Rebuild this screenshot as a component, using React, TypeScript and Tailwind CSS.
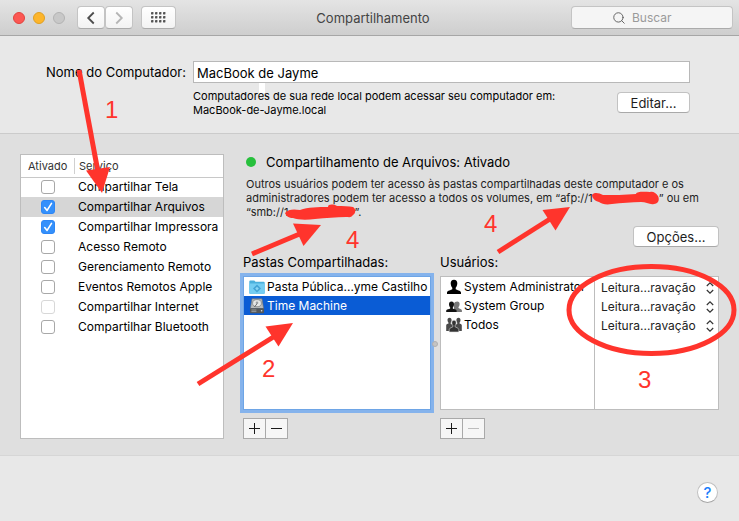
import { useState, type ReactNode } from "react";
import { ChevronLeft, ChevronRight, Search } from "lucide-react";

const services = [
  { id: "tela", name: "Compartilhar Tela", on: false },
  { id: "arquivos", name: "Compartilhar Arquivos", on: true },
  { id: "impressora", name: "Compartilhar Impressora", on: true },
  { id: "remoto", name: "Acesso Remoto", on: false },
  { id: "gerenciamento", name: "Gerenciamento Remoto", on: false },
  { id: "eventos", name: "Eventos Remotos Apple", on: false },
  { id: "internet", name: "Compartilhar Internet", on: false, disabled: true },
  { id: "bluetooth", name: "Compartilhar Bluetooth", on: false },
];

const FolderIcon = () => (
  <svg className="shrink-0" width="16" height="16" viewBox="0 0 16 16">
    <path d="M.3 2.500a1 1 0 0 1 1-1h4l1.200 1.300h8.200a1 1 0 0 1 1 1V14a.8.8 0 0 1-.8.8H1.100a.8.8 0 0 1-.8-.8z" fill="#4bb0dc" />
    <path d="M.3 4.600h15.400V14a.8.8 0 0 1-.8.8H1.100a.8.8 0 0 1-.8-.8z" fill="#74cdf2" />
    <path d="M8 5.600l4 4-4 4-4-4z" fill="#43a3d4" />
    <path d="M8 7.800l1.800 1.800L8 11.400 6.200 9.600z" fill="#8ad6f5" />
  </svg>
);

const DiskIcon = () => (
  <svg className="shrink-0" width="16" height="16" viewBox="0 0 16 16">
    <path d="M3 .8h10l1.600 9.700H1.400z" fill="#b9bbbc" stroke="#6d7174" strokeWidth=".6" />
    <ellipse cx="8" cy="5.200" rx="4.400" ry="3.600" fill="#e6e7e7" stroke="#7c8083" strokeWidth=".8" />
    <circle cx="8" cy="4.800" r="1.300" fill="#9b9ea1" />
    <path d="M8 5.800L5.400 9" stroke="#5c5f62" strokeWidth=".9" />
    <rect x="1" y="10.200" width="14" height="5" rx=".8" fill="#55585a" />
    <path d="M2.400 12h5M2.400 13.600h5" stroke="#a6a9ab" strokeWidth=".8" />
    <circle cx="12.600" cy="12.700" r=".8" fill="#dfe1e2" />
  </svg>
);

const UserIcon = () => (
  <svg className="shrink-0" width="16" height="16" viewBox="0 0 16 16">
    <path d="M8 .8c2.200 0 3.400 1.600 3.300 3.800-.1 2-.8 3.300-1.600 4.100v1.500c1.200.9 5 1.200 5.300 3.200V15H1v-1.600c.3-2 4.100-2.300 5.300-3.200V8.700C5.500 7.900 4.800 6.600 4.700 4.600 4.600 2.400 5.800.8 8 .8z" fill="#000" />
  </svg>
);

const GroupIcon = () => (
  <svg className="shrink-0" width="16" height="16" viewBox="0 0 16 16">
    <path d="M11.300 3.500c1.500 0 2.400 1.100 2.300 2.700-.1 1.300-.5 2.200-1.100 2.800v1c.8.700 3.200.9 3.400 2.300V14H8V5.500c.4-1.300 1.700-2 3.300-2z" fill="#777" />
    <path d="M5.500 3.500c1.700 0 2.600 1.200 2.500 2.900-.1 1.400-.6 2.400-1.200 3v1c.9.700 3.600.8 3.800 2.200V14H.2v-1.400c.2-1.400 3.100-1.500 4-2.200v-1c-.6-.6-1.100-1.600-1.200-3C2.900 4.700 3.800 3.500 5.500 3.500z" fill="#111" />
  </svg>
);

const EveryoneIcon = () => (
  <svg className="shrink-0" width="16" height="16" viewBox="0 0 16 16">
    <path d="M3.500.8c1.400 0 2.200 1 2.100 2.500-.1 1.200-.4 2-.9 2.500v1c.6.500 2 .8 2.300 1.800V14H.2V8.200C.3 7.200 1.800 7 2.500 6.600v-.8c-.5-.5-.9-1.300-1-2.500C1.400 1.800 2.100.8 3.500.8z" fill="#4a4a4a" />
    <path d="M12.500.8c-1.400 0-2.200 1-2.100 2.500.1 1.200.4 2 .9 2.500v1c-.6.500-2 .8-2.300 1.800V14h6.800V8.200c-.1-1-1.600-1.200-2.300-1.600v-.8c.5-.5.9-1.300 1-2.500.1-1.500-.6-2.500-2-2.500z" fill="#4a4a4a" />
    <path d="M8 3.200c1.500 0 2.300 1.100 2.200 2.700-.1 1.300-.5 2.200-1.100 2.700v1.200c.9.700 3.500 1 3.700 2.800V15H3.200v-2.400c.2-1.800 2.800-2.100 3.700-2.800V8.600c-.6-.5-1-1.400-1.100-2.700C5.700 4.300 6.500 3.200 8 3.200z" fill="#333" stroke="#ddd" strokeWidth=".6" />
  </svg>
);

const users = [
  { name: "System Administrator", icon: <UserIcon /> },
  { name: "System Group", icon: <GroupIcon /> },
  { name: "Todos", icon: <EveryoneIcon /> },
];

const toolButton =
  "flex h-[23px] items-center justify-center rounded border border-[#c4c4c4] border-b-[#ababab] bg-gradient-to-b from-white to-[#f3f3f3]";

const PushButton = ({ children }: { children: ReactNode }) => (
  <button className="h-[21px] rounded border border-[#c2c2c2] border-b-[#a9a9a9] bg-white text-[13px] leading-4 text-[#1d1d1d]">
    {children}
  </button>
);

const AddRemove = ({ label, removable = true }: { label: string; removable?: boolean }) => (
  <div className="flex">
    <button aria-label={`Adicionar ${label}`} className="flex h-[21px] w-[23px] items-center justify-center border border-[#a9a9a9] bg-[#f6f6f6]">
      <svg width="11" height="11" viewBox="0 0 11 11" stroke="#1a1a1a">
        <path d="M0 5.500h11M5.500 0v11" />
      </svg>
    </button>
    <button
      aria-label={`Remover ${label}`}
      disabled={!removable}
      className="-ml-px flex h-[21px] w-[23px] items-center justify-center border border-[#a9a9a9] bg-[#f6f6f6] text-[#1a1a1a] disabled:text-[#bcbcbc]"
    >
      <svg width="11" height="11" viewBox="0 0 11 11" stroke="currentColor">
        <path d="M0 5.500h11" />
      </svg>
    </button>
  </div>
);

const TitleBar = () => (
  <header className="grid grid-cols-[1fr_auto_1fr] items-center border-b border-[#a6a6a6] bg-gradient-to-b from-[#e4e4e4] to-[#cecece] py-1.5 pr-1.5 pl-[13px]">
    <div className="flex items-center">
      <div className="flex gap-2">
        <button aria-label="Fechar" className="size-3 rounded-full border border-[#e0443e] bg-[#fc5753]" />
        <button aria-label="Minimizar" className="size-3 rounded-full border border-[#dfa023] bg-[#fdb52b]" />
        <button aria-label="Ampliar" disabled className="size-3 rounded-full border border-[#b3b3b3] bg-[#c8c8c8]" />
      </div>
      <button aria-label="Voltar" className={`${toolButton} ml-3 w-7`}>
        <ChevronLeft className="size-[22px] text-[#4d4d4d]" strokeWidth={2} strokeLinecap="butt" strokeLinejoin="miter" />
      </button>
      <button aria-label="Avançar" className={`${toolButton} w-7`}>
        <ChevronRight className="size-[22px] text-[#b5b5b5]" strokeWidth={2} strokeLinecap="butt" strokeLinejoin="miter" />
      </button>
      <button aria-label="Mostrar tudo" className={`${toolButton} ml-2 w-[35px]`}>
        <svg width="15" height="11" viewBox="0 0 15 11" fill="#555">
          {[0, 4, 8].map((y) =>
            [0, 4, 8, 12].map((x) => <rect key={`${x}-${y}`} x={x} y={y} width="2.400" height="2.400" rx=".4" />)
          )}
        </svg>
      </button>
    </div>
    <h1 className="text-[13px] leading-4 text-[#444]">Compartilhamento</h1>
    <label className="flex h-[23px] w-[162px] items-center gap-1.5 justify-self-end rounded border border-[#c4c4c4] border-b-[#ababab] bg-[#f5f5f5] pl-10">
      <Search className="size-[14px] shrink-0 text-[#5c5c5c]" strokeWidth={1.6} />
      <input aria-label="Buscar" placeholder="Buscar" className="w-full min-w-0 bg-transparent text-xs leading-4 outline-none placeholder:text-[#9a9a9a]" />
    </label>
  </header>
);

const ComputerName = () => (
  <section className="grid grid-cols-[172px_1fr] gap-x-[7px] border-b border-[#cbcbcb] pt-[25px] pr-[49px] pb-[16px] pl-[14px]">
    <label htmlFor="computer" className="pt-[3px] text-right text-[13px] leading-4">
      Nome do Computador:
    </label>
    <input id="computer" defaultValue="MacBook de Jayme" className="h-[22px] w-full border border-[#b8b8b8] bg-white px-[3px] pt-0.5 text-[13px] leading-4 outline-none" />
    <div className="relative col-start-2 flex items-start justify-between">
      <span className="absolute top-0 left-[66px] h-2.5 w-1.5 bg-white" />
      <p className="relative pt-1.5 text-[11px] leading-[14px]">
        Computadores de sua rede local podem acessar seu computador em:
        <br />
        MacBook-de-Jayme.local
      </p>
      <div className="flex w-[73px] flex-col pt-[9px]">
        <PushButton>Editar...</PushButton>
      </div>
    </div>
  </section>
);

const Services = () => {
  const [active, setActive] = useState(services.filter((s) => s.on).map((s) => s.id));

  const toggle = (id: string) =>
    setActive(active.includes(id) ? active.filter((a) => a !== id) : [...active, id]);

  return (
    <div className="w-[204px] shrink-0 border border-[#bdbdbd] bg-white">
      <table className="w-full table-fixed border-collapse">
        <thead>
          <tr className="h-[22px] border-b border-[#c8c8c8] text-left text-[11px] text-[#333]">
            <th className="w-[53px] py-0 pr-0 pl-[7px] font-normal">Ativado</th>
            <th className="py-0 font-normal">
              <div className="border-l border-[#d0d0d0] pl-1">Serviço</div>
            </th>
          </tr>
        </thead>
        <tbody>
          {services.map((s) => (
            <tr key={s.id} className={s.id === "arquivos" ? "h-5 bg-[#d6d6d6]" : "h-5"}>
              <td className="p-0 pl-5">
                <span className="grid size-3.5">
                  <input
                    type="checkbox"
                    id={s.id}
                    checked={active.includes(s.id)}
                    disabled={s.disabled}
                    onChange={() => toggle(s.id)}
                    className="col-start-1 row-start-1 size-3.5 appearance-none rounded-[3px] border border-[#a8a8a8] bg-white checked:border-[#2d86f5] checked:bg-[#3490fb] disabled:border-[#d8d8d8]"
                  />
                  {active.includes(s.id) && (
                    <svg className="pointer-events-none col-start-1 row-start-1" viewBox="0 0 14 14" fill="none" stroke="#fff" strokeWidth="1.600" strokeLinecap="round" strokeLinejoin="round">
                      <path d="M3.700 7.500l2.400 2.900 4.400-7" />
                    </svg>
                  )}
                </span>
              </td>
              <td className="p-0 pl-1 text-xs whitespace-nowrap">
                <label htmlFor={s.id}>{s.name}</label>
              </td>
            </tr>
          ))}
        </tbody>
      </table>
    </div>
  );
};

const SharedFolders = () => (
  <div className="w-[188px] shrink-0">
    <h3 className="pb-1.5 text-[13px] leading-4">Pastas Compartilhadas:</h3>
    <ul className="h-[134px] border border-[#6ea5e6] bg-white text-xs leading-[19px] whitespace-nowrap ring-3 ring-[#85b3ec]">
      <li className="flex items-center gap-0.5 pl-[5px]">
        <FolderIcon />
        Pasta Pública...yme Castilho
      </li>
      <li className="flex items-center gap-0.5 bg-[#0a5cd5] pl-[5px] text-white">
        <DiskIcon />
        Time Machine
      </li>
    </ul>
    <div className="pt-2">
      <AddRemove label="pasta" />
    </div>
  </div>
);

const Users = () => (
  <div className="min-w-0 flex-1">
    <h3 className="pb-1.5 text-[13px] leading-4">Usuários:</h3>
    <div className="grid h-[134px] grid-cols-[1fr_124px] border border-[#bdbdbd] bg-white text-xs leading-[19px]">
      <ul className="min-w-0 pl-[5px]">
        {users.map((u) => (
          <li key={u.name} className="flex items-center gap-0.5 whitespace-nowrap">
            {u.icon}
            {u.name}
          </li>
        ))}
      </ul>
      <div className="border-l border-[#bdbdbd] pt-px pr-1 pl-1.5">
        {users.map((u) => (
          <div key={u.name} className="grid items-center">
            <select aria-label={`Permissão de ${u.name}`} className="col-start-1 row-start-1 h-[19px] w-full appearance-none bg-transparent text-xs leading-[19px] text-[#222] outline-none">
              <option>Leitura...ravação</option>
            </select>
            <svg className="pointer-events-none col-start-1 row-start-1 justify-self-end" width="8" height="12" viewBox="0 0 8 12" fill="none" stroke="#333" strokeWidth="1.200">
              <path d="M.8 4L4 .9 7.200 4M.8 8L4 11.100 7.200 8" />
            </svg>
          </div>
        ))}
      </div>
    </div>
    <div className="pt-2">
      <AddRemove label="usuário" removable={false} />
    </div>
  </div>
);

const FileSharing = () => (
  <div className="min-w-0 flex-1">
    <h2 className="flex items-center gap-2.5 pl-[3px] text-[13px] leading-4">
      <span className="size-2.5 rounded-full bg-[#27c03c]" />
      Compartilhamento de Arquivos: Ativado
    </h2>
    <p className="pt-[7px] pl-[3px] text-[11px] leading-[14px] whitespace-nowrap text-[#222]">
      Outros usuários podem ter acesso às pastas compartilhadas deste computador e os
      <br />
      administradores podem ter acesso a todos os volumes, em “afp://1
      <span className="inline-block w-[66px]" />” ou em
      <br />
      “smb://1
      <span className="inline-block w-[66px]" />”.
    </p>
    <div className="flex justify-end pt-[7px]">
      <div className="flex w-[86px] flex-col">
        <PushButton>Opções...</PushButton>
      </div>
    </div>
    <div className="flex items-center pt-[7px]">
      <SharedFolders />
      {/* Split handle */}
      <span className="relative mr-0.5 mb-1.5 ml-px size-1.5 shrink-0 rounded-full border border-[#b0b0b0] bg-[#c4c4c4]" />
      <Users />
    </div>
  </div>
);

// Red arrows, numbers and scribbles drawn over the window
const Annotations = () => (
  <svg className="pointer-events-none absolute top-0 left-0" width="739" height="521" viewBox="0 0 739 521">
    <g stroke="#ff342c" strokeWidth="5" fill="none">
      <path d="M79 70L98 172" />
      <path d="M198 384L275 336" />
      <path d="M252 254L302 233" />
      <path d="M498 252L550 219" />
      <ellipse cx="651.500" cy="310" rx="82.500" ry="43.500" />
    </g>
    <g fill="#ff342c">
      <path d="M86 170.500L110 167L102 193z" />
      <path d="M265.500 326.500L293 323L278.500 346.500z" />
      <path d="M293 223.500L321 225L303.500 246z" />
      <path d="M542.500 210L570 207L555.500 230.500z" />
      <path d="M285 213c3-4 9-4 15-3 8-3 18-3 28-3 0-3 5-3 9-1 6 0 12 0 16 1 3 2 3 6 0 8-2 3-4 2-7 2-10 0-20 1-31 2-8 1-17 1-22-1-4 0-7-2-8-5z" />
      <path d="M592 195c2-3 7-2 11 0 10 0 22 0 33-1 1-3 9-2 14-2 3-1 6 1 8 4 2 4 0 8-4 8-4 1-8-2-13-2-9 0-20 1-29 2-6 1-10 0-13-2-4-1-7-4-7-7z" />
    </g>
    <g fill="#ff342c" fontSize="24" fontFamily="Liberation Sans, Arial, sans-serif">
      <text x="105" y="118">1</text>
      <text x="262" y="377">2</text>
      <text x="638" y="388">3</text>
      <text x="346" y="248">4</text>
      <text x="484" y="232">4</text>
    </g>
  </svg>
);

export default function App() {
  return (
    <main className="relative flex min-h-screen flex-col overflow-hidden bg-[#e8e8e8] font-['Inter',sans-serif] text-black">
      <TitleBar />
      <ComputerName />
      <section className="flex gap-[19px] border-b border-[#d6d6d6] bg-[#dfdfdf] px-5 pt-5 pb-4">
        <Services />
        <FileSharing />
      </section>
      <footer className="flex justify-end px-[21px] pt-[26px] pb-[18px]">
        <button aria-label="Ajuda" className="size-[21px] rounded-full border border-[#c0c0c0] border-b-[#a5a5a5] bg-white text-[15px] leading-4 font-medium text-[#1a7efb]">
          ?
        </button>
      </footer>
      <Annotations />
    </main>
  );
}
